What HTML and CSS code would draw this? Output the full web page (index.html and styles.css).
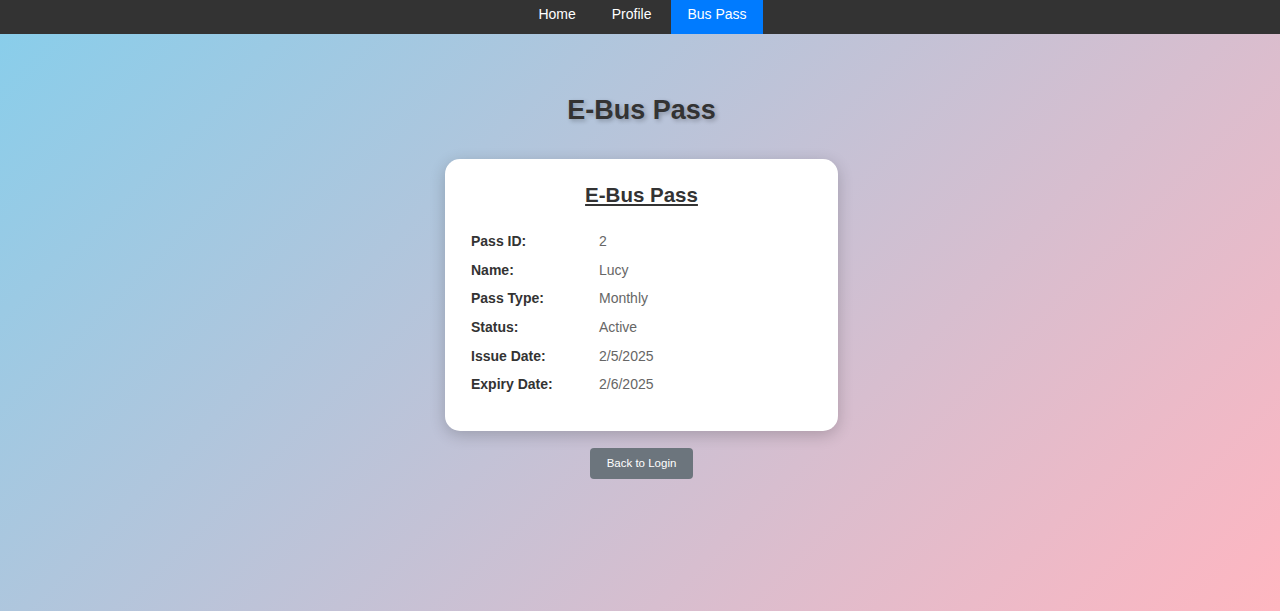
FILE: index.html
```html
<!DOCTYPE html>
<html lang="en">
<head>
<meta charset="UTF-8">
<title>E-Bus Pass</title>
<link rel="stylesheet" href="styles.css">
</head>
<body>
<nav class="navbar">
  <a href="#" class="nav-link">Home</a>
  <a href="#" class="nav-link">Profile</a>
  <a href="#" class="nav-link active">Bus Pass</a>
</nav>
<main class="page">
  <h1 class="page-title">E-Bus Pass</h1>
  <section class="pass-card">
    <h2 class="card-title">E-Bus Pass</h2>
    <div class="pass-rows">
      <div class="pass-row"><span class="label">Pass ID:</span><span class="value">2</span></div>
      <div class="pass-row"><span class="label">Name:</span><span class="value">Lucy</span></div>
      <div class="pass-row"><span class="label">Pass Type:</span><span class="value">Monthly</span></div>
      <div class="pass-row"><span class="label">Status:</span><span class="value">Active</span></div>
      <div class="pass-row"><span class="label">Issue Date:</span><span class="value">2/5/2025</span></div>
      <div class="pass-row"><span class="label">Expiry Date:</span><span class="value">2/6/2025</span></div>
    </div>
  </section>
  <button class="back-btn" type="button">Back to Login</button>
</main>
</body>
</html>
```
FILE: styles.css
```css
html, body {
  margin: 0;
  padding: 0;
  height: 100%;
}
body {
  font-family: "Liberation Sans", Arial, sans-serif;
  background: linear-gradient(135deg, #87ceeb 0%, #ffb6c1 100%);
  min-height: 611px;
  color: #333;
}
.navbar {
  background: #333;
  height: 34px;
  display: flex;
  justify-content: center;
  gap: 4px;
  padding-left: 5px;
}
.nav-link {
  color: #fff;
  text-decoration: none;
  font-size: 14px;
  line-height: 16px;
  padding: 6px 16px 12px;
}
.nav-link.active {
  background: #007bff;
}
.page {
  display: flex;
  flex-direction: column;
  align-items: center;
  padding-left: 3px;
}
.page-title {
  margin: 60px 0 0;
  font-size: 27px;
  line-height: 32px;
  font-weight: bold;
  color: #333;
  text-shadow: 2px 2px 4px rgba(0, 0, 0, 0.25);
}
.pass-card {
  margin-top: 33px;
  width: 393px;
  box-sizing: border-box;
  background: #fff;
  border-radius: 15px;
  box-shadow: 0 4px 16px rgba(0, 0, 0, 0.2);
  padding: 24px 26px 32px;
}
.card-title {
  margin: 0;
  text-align: center;
  font-size: 20.5px;
  line-height: 24px;
  font-weight: bold;
  text-decoration: underline;
  color: #333;
}
.pass-rows {
  margin-top: 20px;
  display: flex;
  flex-direction: column;
}
.pass-row {
  display: flex;
  height: 28.6px;
  align-items: center;
  font-size: 14px;
}
.label {
  width: 128px;
  font-weight: bold;
  color: #333;
}
.value {
  color: #666;
}
.back-btn {
  margin-top: 17px;
  background: #6c757d;
  color: #fff;
  border: none;
  border-radius: 4px;
  font-family: "Liberation Sans", Arial, sans-serif;
  font-size: 11.5px;
  width: 103px;
  height: 31px;
  padding: 0;
  cursor: pointer;
}
```
